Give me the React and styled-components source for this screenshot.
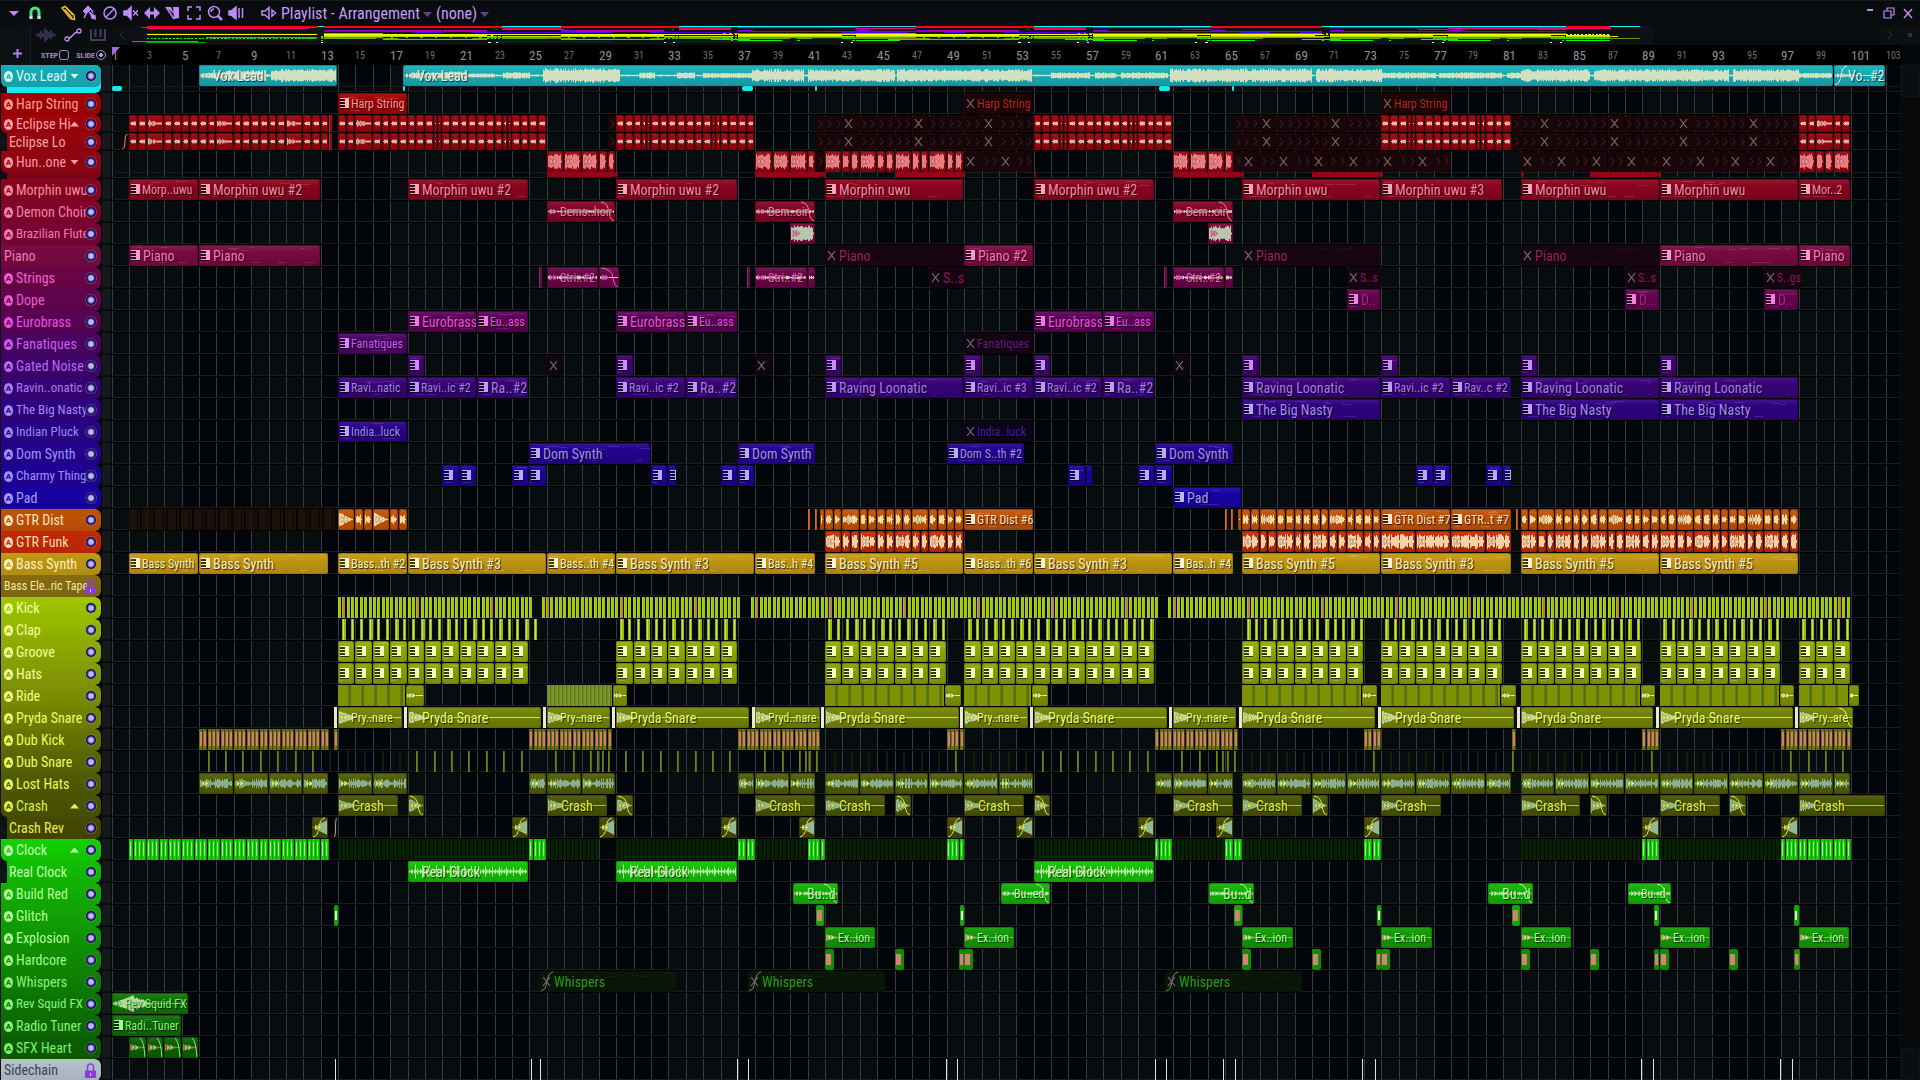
import React from "react";
import styled, { createGlobalStyle, css } from "styled-components";

const BAR = 17.39;
const px = (bars) => Math.round(bars * BAR);
const rnd = (n) => {
  const v = Math.sin(n * 12.9898 + 4.1) * 43758.5453;
  return v - Math.floor(v);
};

/* ---------- clip builders ---------- */
const P = (s, e, label, extra) => ({ k: "pat", s, e, label, ...extra });
const M = (s, e, label) => ({ k: "mute", s, e, label });
const A = (s, e, label, wave, extra) => ({ k: "aud", s, e, label, wave, ...extra });
const H = (s, w, tone) => ({ k: "hit", s, w, tone });
const D = (s, e) => ({ k: "dim", s, e });

const each = (list, fn) => list.flatMap(fn);
const run = (s, e, step, fn) => {
  const out = [];
  for (let i = 0; s + i * step < e - 0.01; i++) out.push(fn(s + i * step, i));
  return out;
};
const seq = (s, e, pattern, fn) => {
  const out = [];
  let at = s;
  for (let i = 0; at < e - 0.01; i++) {
    const w = Math.min(pattern[i % pattern.length], e - at);
    out.push(fn(at, at + w, i));
    at += w;
  }
  return out;
};

const tiny = (s, e) => A(s, e, null, e - s > 0.7 ? "hitWide" : "hit");
const roughly = [0.5, 0.5, 0.5, 0.25, 0.25, 0.5, 0.5, 0.5, 0.5];
const muffled = (s, e, crosses) => {
  const out = [];
  for (let at = s; at < e; ) {
    const x = crosses.includes(at);
    out.push({ ...M(at, at + (x ? 1 : 0.5)), x });
    at += x ? 1 : 0.5;
  }
  return out;
};
const eclipse = [
  ...seq(2, 3, [0.5], tiny), tiny(3, 4), ...seq(4, 7, [0.5], tiny), tiny(7, 8),
  ...seq(8, 11, [0.5], tiny), tiny(11, 12), ...seq(12, 13.5, [0.5], tiny), H(13.45, 3, "bar"),
  ...seq(14, 15, [0.5], tiny), tiny(15, 16), ...seq(16, 19, [0.5], tiny), ...seq(19, 26, [0.5, 0.25, 0.25, 0.5, 0.5, 0.5, 0.5, 0.5, 0.5], tiny),
  { ...M(29.5, 30), x: false }, ...seq(30, 38, roughly, tiny),
  ...muffled(41.5, 54, [43, 47, 51]),
  ...seq(54, 62, roughly, tiny),
  ...muffled(65.5, 74, [67, 71]),
  ...seq(74, 81.5, roughly, tiny),
  ...muffled(81.5, 98, [83, 87, 91, 95]),
  ...seq(98, 99, [0.5], tiny), tiny(99, 100), ...seq(100, 101, [0.5], tiny),
];

const big = (s, e) => A(s, e, null, "full");
const hunMute = (s, e) => seq(s, e, [1, 0.5, 0.5], (a, b, i) => ({ ...M(a, b), x: i % 3 === 0 }));
const hundred = [
  ...seq(26, 29, [1], big), ...seq(29, 30, [0.5], big),
  ...seq(38, 41.5, [1], big), { ...M(41.5, 42), x: false }, ...seq(42, 50, [1, 0.5, 0.5], big),
  ...hunMute(50, 54), ...seq(62, 65.5, [1], big), { ...M(65.5, 66), x: false }, ...hunMute(66, 78), ...hunMute(82, 98),
  big(98, 99), big(99, 99.5), big(99.5, 100), big(100, 101),
];

const gtrPattern = [0.5, 0.5, 1, 0.5, 0.5, 0.5, 0.5, 0.5, 0.5, 1, 0.5, 0.5, 0.5, 0.5];
const gtr = (s, e) => A(s, e, null, "mid");
const funk = (s, e) => A(s, e, null, "funk");
const snare = (s, e, label, extra) => [
  H(s - 0.22, 3, "cream"),
  A(s, e, label, "decay", extra),
];
const sections = [[14, 25], [30, 37], [42, 49], [50, 61], [66, 73], [74, 81], [82, 89], [90, 97], [98, 101]];
const beats = each(sections, ([s, e]) => run(s, e, 1, (a) => P(a, a + 1)));
const ride = each(
  [[14, 17.9, 19], [26, 29.8, 30.7], [42, 48.9, 49.9], [50, 53.9, 54.9], [66, 72.9, 73.8], [74, 80.9, 81.8], [82, 88.9, 89.8], [90, 96.9, 97.8], [98, 100.9, 101.5]],
  ([s, m, e]) => [{ k: "ride", s, e: m, dense: s === 26 }, A(m, e, null, "thin")]
);
const marks = (list, tone) => list.map((b) => H(b, 2, tone));
const from = (s, n) => Array.from({ length: n }, (_, i) => s + i);

const tracks = [
  {
    name: "Vox Lead", fold: "down", h: 28, sub: "#1ce6f0", c: "#18adb5", t: "#d6fbf6", w: "#e9e6c3",
    clips: [A(6, 14, "Vox Lead", "vox"), A(17.75, 100, "Vox Lead", "vox"), A(100, 103, "Vo..#2", "thin", { fadeIn: true })],
    subs: [[1, 1.6], [17.75, 17.85], [37.2, 37.85], [41.43, 41.5], [61.2, 61.85], [65.4, 65.5]],
  },
  { name: "Harp String", c: "#a30202", t: "#ff9a96", clips: [P(14, 18, "Harp String"), M(50, 54, "Harp String"), M(74, 78, "Harp String")] },
  { name: "Eclipse Hi", fold: "up", h: 18, c: "#a0030c", t: "#ffa3a0", w: "#ffc9b8", clips: eclipse },
  { name: "Eclipse Lo", child: true, h: 18, c: "#99040f", t: "#ffa3a0", w: "#d8cdb0", clips: [{ k: "fade", s: 1.6, e: 2 }, ...eclipse] },
  {
    name: "Hun..one", fold: "down", h: 28, sub: "#7d0418", c: "#930513", t: "#ff98a0", w: "#f08c88", clips: hundred,
    subs: [[26, 29.9], [29.9, 30.05], [38, 41.9], [41.9, 42.05], [46, 49.9], [49.9, 50.05], [54, 54.1], [62, 65.9], [65.9, 66.05], [70, 73.9], [73.9, 74.1], [82, 82.15], [86, 89.9], [89.9, 90.1]],
  },
  {
    name: "Morphin uwu", c: "#8a0520", t: "#f58aa4",
    clips: [P(2, 6, "Morp..uwu"), P(6, 13, "Morphin uwu #2"), P(18, 25, "Morphin uwu #2"), P(30, 37, "Morphin uwu #2"), P(42, 50, "Morphin uwu"), P(54, 61, "Morphin uwu #2"), P(66, 74, "Morphin uwu"), P(74, 81, "Morphin uwu #3"), P(82, 90, "Morphin uwu"), P(90, 98, "Morphin uwu"), P(98, 101, "Mor..2")],
  },
  { name: "Demon Choir", c: "#82042c", t: "#f580a8", w: "#cfd8ba", clips: [A(26, 30, "Demo..hoir", "mid2", { fadeOut: true }), A(38, 41.5, "Dem..oir", "mid2", { fadeOut: true }), A(62, 65.5, "Dem..oir", "mid2", { fadeOut: true })] },
  { name: "Brazilian Flute", c: "#7a0435", t: "#f27ab0", w: "#c0dcb8", clips: [A(40, 41.5, null, "full"), A(64, 65.5, null, "full")] },
  {
    name: "Piano", plain: true, c: "#780a42", t: "#f57ab8",
    clips: [P(2, 6, "Piano"), P(6, 13, "Piano"), M(42, 50, "Piano"), P(50, 54, "Piano #2"), M(66, 74, "Piano"), M(82, 90, "Piano"), P(90, 98, "Piano"), P(98, 101, "Piano")],
  },
  {
    name: "Strings", c: "#6c0448", t: "#ee62cc", w: "#e8e2c0",
    clips: [
      ...each([25.55, 37.5, 61.5], (s) => [H(s, 3, "bar")]),
      A(26, 29, "Stri..#2", "mid2"), A(29, 30.2, null, "thin", { fadeOut: true }), A(38, 41, "Stri..#2", "mid2"), A(41, 41.5, null, "mid2"), A(62, 65, "Stri..#2", "mid2"), A(65, 65.5, null, "mid2"),
      M(48, 50.2, "S..s"), M(72, 74.1, "S..s"), M(88, 90, "S..s"), M(96, 98.2, "S..gs"),
    ],
  },
  { name: "Dope", c: "#63044e", t: "#ee58d8", clips: [72, 88, 96].map((s) => P(s, s + 2, "D..", { quiet: true })) },
  { name: "Eurobrass", c: "#590455", t: "#f04ce0", clips: [P(18, 22, "Eurobrass"), P(22, 25, "Eu..ass"), P(30, 34, "Eurobrass"), P(34, 37, "Eu..ass"), P(54, 58, "Eurobrass"), P(58, 61, "Eu..ass")] },
  { name: "Fanatiques", c: "#4b0463", t: "#c85ef0", clips: [P(14, 18, "Fanatiques"), M(50, 54, "Fanatiques")] },
  { name: "Gated Noise", c: "#40036d", t: "#b46cf0", clips: [P(18, 19), M(26, 27), P(30, 31), M(38, 39), P(42, 43), P(50, 51), P(54, 55), M(62, 63), P(66, 67), P(74, 75), P(82, 83), P(90, 91)] },
  {
    name: "Ravin..onatic", c: "#370377", t: "#a77cf0",
    clips: [P(14, 18, "Ravi..natic"), P(18, 22, "Ravi..ic #2"), P(22, 25, "Ra..#2"), P(30, 34, "Ravi..ic #2"), P(34, 37, "Ra..#2"), P(42, 50, "Raving Loonatic"), P(50, 54, "Ravi..ic #3"), P(54, 58, "Ravi..ic #2"), P(58, 61, "Ra..#2"), P(66, 74, "Raving Loonatic"), P(74, 78, "Ravi..ic #2"), P(78, 81.5, "Rav..c #2"), P(82, 90, "Raving Loonatic"), P(90, 98, "Raving Loonatic")],
  },
  { name: "The Big Nasty", c: "#2f0380", t: "#a488f5", clips: [P(66, 74, "The Big Nasty"), P(82, 90, "The Big Nasty"), P(90, 98, "The Big Nasty")] },
  { name: "Indian Pluck", c: "#290388", t: "#9c86f5", clips: [P(14, 18, "India..luck"), M(50, 54, "India..luck")] },
  { name: "Dom Synth", c: "#240390", t: "#a090f8", clips: [P(25, 32, "Dom Synth"), P(37, 41.5, "Dom Synth"), P(49, 53.5, "Dom S..th #2"), P(61, 65.5, "Dom Synth")] },
  { name: "Charmy Thing", c: "#1e0398", t: "#a090f8", clips: [...each([20, 21, 24, 25, 32, 36, 37, 56, 60, 61, 76, 77, 80], (s) => [P(s, s + 1)]), P(33, 33.5), P(57, 57.4), P(81, 81.5)] },
  { name: "Pad", c: "#1902a4", t: "#a89cfa", clips: [P(62, 66, "Pad")] },
  {
    name: "GTR Dist", c: "#c25204", t: "#ffe3bd", w: "#ffe9b4",
    clips: [
      { k: "dim", s: 2, e: 14, wide: true },
      ...[[14, 15], [16, 17]].map(([a, b]) => A(a, b, null, "decay")), ...[[15, 15.5], [15.5, 16], [17, 17.5], [17.5, 18]].map(([a, b]) => gtr(a, b)),
      ...marks([41, 41.4, 65, 65.36, 81.75], "bar"), gtr(41.7, 42), gtr(65.75, 66),
      ...seq(42, 50, gtrPattern, gtr), P(50, 54, "GTR Dist #6"), ...seq(66, 74, gtrPattern, gtr), P(74, 78, "GTR Dist #7"), P(78, 81.5, "GTR..t #7"), ...seq(82, 90, gtrPattern, gtr), ...seq(90, 98, gtrPattern, gtr),
    ],
  },
  { name: "GTR Funk", c: "#c42a04", t: "#ffd9b4", w: "#fbe3b8", clips: [...seq(42, 50, [1, 0.5, 0.5], funk), ...seq(66, 74, [1, 0.5, 0.5], funk), ...seq(74, 81.5, [2], funk), ...seq(82, 98, [1, 0.5, 0.5], funk)] },
  {
    name: "Bass Synth", c: "#c19812", t: "#fff0c0",
    clips: [P(2, 6, "Bass Synth"), P(6, 13.5, "Bass Synth"), P(14, 18, "Bass..th #2"), P(18, 26, "Bass Synth #3"), P(26, 30, "Bass..th #4"), P(30, 38, "Bass Synth #3"), P(38, 41.5, "Bas..h #4"), P(42, 50, "Bass Synth #5"), P(50, 54, "Bass..th #6"), P(54, 62, "Bass Synth #3"), P(62, 65.5, "Bas..h #4"), P(66, 74, "Bass Synth #5"), P(74, 81.5, "Bass Synth #3"), P(82, 90, "Bass Synth #5"), P(90, 98, "Bass Synth #5")],
  },
  { name: "Bass Ele..ric Tape", plain: true, lock: true, c: "#886c0e", t: "#f5e7a8", clips: [] },
  {
    name: "Kick", c: "#a2c600", t: "#f2ff9c",
    clips: each([[14, 25.2], [25.7, 37.1], [37.75, 61.1], [61.75, 101]], ([s, e]) => run(s, e, 0.25, (a, i) => H(a, 3, i % 17 === 1 ? "pinkish" : "bar"))),
  },
  {
    name: "Clap", c: "#99ba00", t: "#f2ff9c",
    clips: each([[14.25, 25.5], [30.2, 37], [42.2, 49], [50.2, 61], [66.25, 73], [74.2, 81], [82.2, 89], [90.2, 97], [98.2, 101]], ([s, e]) => run(s, e, 0.5, (a, i) => H(a, i % 3 ? 3 : 4, "clap"))),
  },
  { name: "Groove", c: "#90ac02", t: "#f2ff9c", clips: beats },
  { name: "Hats", c: "#889f04", t: "#f2ff9c", clips: beats },
  { name: "Ride", c: "#7f9204", t: "#eeff88", w: "#f2f9b0", clips: ride },
  {
    name: "Pryda Snare", c: "#738404", t: "#e9ff6a", w: "#cfe0b0",
    clips: [
      ...snare(14, 17.72, "Pry..nare"), ...snare(18, 25.7, "Pryda Snare"), ...snare(26, 29.72, "Pry..nare"), ...snare(30, 37.7, "Pryda Snare"), ...snare(38, 41.75, "Pryd..nare"), ...snare(42, 49.75, "Pryda Snare"), ...snare(50, 53.72, "Pry..nare"),
      ...snare(54, 61.7, "Pryda Snare"), ...snare(62, 65.72, "Pry..nare"), ...snare(66, 73.7, "Pryda Snare"), ...snare(74, 81.7, "Pryda Snare"), ...snare(82, 89.7, "Pryda Snare"), ...snare(90, 97.7, "Pryda Snare"), ...snare(98, 101.2, "Pry..are", { fadeOut: true }),
    ],
  },
  {
    name: "Dub Kick", c: "#667504", t: "#e9ff5a",
    clips: each([[6, 13.5], [13.75, 14], [25, 29.7], [37, 41.7], [49, 50], [61, 65.7], [73, 74], [81.5, 81.7], [89, 90], [97, 101]], ([s, e]) => run(s, e, 0.25, (a) => H(a, 4, "pink"))),
  },
  {
    name: "Dub Snare", c: "#5b6804", t: "#e9ff5a",
    clips: [
      ...marks([...from(6.5, 7), ...from(18.5, 7), ...from(26.5, 3), 28.9, 29.15, 29.5, ...from(30.5, 7), ...from(38.5, 3), 40.85, 41.1, 41.5, 49.5, ...from(54.5, 7), ...from(62.5, 3), 64.85, 65.1, 65.5, 73.5, 81.5, 89.5, ...from(97.5, 4)], "bar"),
      ...marks([...from(13.5, 5), ...from(42.5, 7), ...from(50.5, 4), ...from(66.5, 7), ...from(74.5, 7), ...from(82.5, 7), ...from(90.5, 7)], "faint"),
    ],
  },
  {
    name: "Lost Hats", c: "#505c04", t: "#e9ff5a", w: "#8fb9a0",
    clips: each([[6, 8], [8, 10], [10, 12], [12, 13.5], [14, 16], [16, 18], [25, 26], [26, 28], [28, 30], [37, 38], [38, 40], [40, 41.5], ...seq(42, 54, [2], (a, b) => [a, b]), [61, 62], [62, 64], [64, 65.5], ...seq(66, 81.5, [2], (a, b) => [a, b]), ...seq(82, 101, [2], (a, b) => [a, b])], ([a, b]) => [A(a, b, null, "noise")]),
  },
  {
    name: "Crash", fold: "up", c: "#4a5402", t: "#dff23c", w: "#9cc4a8",
    clips: [...each([14, 26, 38, 42, 50, 62, 66, 74, 82, 90], (s) => [A(s, s + 3.5, "Crash", "decay")]), A(98, 103, "Crash", "decay"), ...each([18, 30, 46, 54, 70, 86, 94], (s) => [A(s, s + 1, null, "decay", { fadeOut: true })])],
  },
  {
    name: "Crash Rev", child: true, c: "#444a02", t: "#e8f052", w: "#9cc4a8",
    clips: [12.5, 24, 29, 36, 40.5, 49, 53, 60, 64.5, 73, 89, 97].map((s) => A(s, s + 1, null, "rev", { fadeIn: true })).concat([{ k: "fade", s: 13.75, e: 14 }]),
  },
  {
    name: "Clock", fold: "up", c: "#12d202", t: "#c8ffb4",
    clips: [
      ...each([[2, 13.5], [25, 26], [37, 38], [41, 42], [49, 50], [61, 62], [65, 66], [73, 74], [89, 90], [97, 101]], ([s, e]) => run(s, e, 0.25, (a) => H(a, 4, "clock"))),
      D(14, 25), D(26, 29), D(30, 37), D(38, 41), D(42, 49), D(54, 61), D(62, 65), D(66, 73), D(82, 89), D(90, 97),
    ],
  },
  { name: "Real Clock", child: true, c: "#12c002", t: "#c4ffb0", w: "#c8f0b8", clips: [18, 30, 54].map((s) => A(s, s + 7, "Real Clock", "spikes")) },
  { name: "Build Red", c: "#12b204", t: "#b4ff98", w: "#b8ecae", clips: [[40.15, 42.8, "Bu..d"], [52.15, 55, "Bu..ed"], [64.1, 66.75, "Bu..d"], [80.15, 82.75, "Bu..d"], [88.15, 90.7, "Bu..d"]].map(([a, b, l]) => A(a, b, l, "mid2", { fadeOut: true })) },
  { name: "Glitch", c: "#11a604", t: "#b4ff98", clips: [H(13.75, 4, "flash"), H(41.5, 8, "blush"), H(49.75, 4, "flash"), H(65.5, 8, "blush"), H(73.75, 4, "flash"), H(81.5, 8, "blush"), H(89.7, 5, "flash"), H(97.7, 5, "flash")] },
  { name: "Explosion", c: "#109a04", t: "#b4ff98", w: "#d99a80", clips: [42, 50, 66, 74, 82, 90, 98].map((s) => A(s, s + 2.95, "Ex..ion", "decaySm")) },
  { name: "Hardcore", c: "#0f8e04", t: "#a2fa8c", clips: [H(49.7, 5, "blush"), H(73.7, 5, "blush"), H(89.7, 5, "blush"), H(97.7, 6, "blush"), ...[42, 46, 50, 66, 70, 74, 82, 86, 90, 94].map((s) => H(s, 9, "blush"))] },
  { name: "Whispers", c: "#0e8204", t: "#8cf27c", clips: [[25.6, 33.5], [37.6, 45.5], [61.55, 69.5]].map(([a, b]) => ({ ...M(a, b, "Whispers"), fadeIn: true })) },
  { name: "Rev Squid FX", c: "#0d7604", t: "#86f578", w: "#c4e8ac", clips: [A(1, 5.45, "Rev Squid FX", "squid")] },
  { name: "Radio Tuner", c: "#0c6c04", t: "#86f578", clips: [P(1, 5, "Radi..Tuner")] },
  { name: "SFX Heart", c: "#0b6004", t: "#7af06c", w: "#d8605c", clips: [2, 3, 4, 5].map((s) => A(s, s + 1, null, "decaySm", { curl: true })) },
  { name: "Sidechain", plain: true, lock: true, c: "#b6c1cf", t: "#3a4450", clips: [13.8, 25.1, 25.6, 36.95, 37.6, 48.95, 49.6, 60.95, 61.6, 64.9, 65.6, 72.9, 73.6, 88.9, 89.6, 96.9, 97.6].map((s) => H(s, 1, "white")) },
];

/* ---------- styles ---------- */
const Global = createGlobalStyle`
  *, *::before, *::after { box-sizing: border-box; }
  body { margin: 0; background: #05090b; overflow: hidden; }
  button { font: inherit; color: inherit; background: none; border: 0; padding: 0; cursor: pointer; }
`;
const Window = styled.div`
  min-width: 1200px; height: 100vh; display: flex; flex-direction: column; overflow: hidden;
  background: #06090b; color: #b98cf5; font-family: "Roboto Condensed", "Open Sans Condensed", "Liberation Sans Narrow", Roboto, sans-serif; font-size: 14px;
`;
const TitleBar = styled.header`
  display: flex; align-items: center; height: 25px; padding: 0 3px 0 6px; background: #080c0e; border-top: 1px solid #14181a; flex: none;
`;
const Tools = styled.div`display: flex; align-items: center; gap: 1px;`;
const ToolButton = styled.button`
  width: ${(p) => p.$w || 20}px; height: 22px; display: grid; place-items: center; color: ${(p) => p.$c || "#bf8af8"};
  svg { width: 16px; height: 16px; display: block; }
`;
const Title = styled.h1`margin: 0; font-size: 16px; font-weight: 400; color: #c79af8; white-space: nowrap;`;
const Caret = styled.span`width: 9px; height: 5px; margin: 3px 4px 0 3px; background: #5d4380; clip-path: polygon(0 0, 100% 0, 50% 100%);`;
const Spacer = styled.div`flex: 1;`;

const Head = styled.div`display: grid; grid-template-columns: 112px minmax(0, 1fr); height: 40px; flex: none; background: #06090b;`;
const Corner = styled.div`display: grid; grid-template-columns: 31px 1fr; background: #0a0e10;`;
const AddBox = styled.div`display: grid; place-items: end center; padding: 0 0 2px 5px; border-right: 1px solid #1a1f22; border-top-left-radius: 12px; background: #0d1113;`;
const AddButton = styled.button`color: #b67ff2; width: 20px; height: 20px; display: grid; place-items: center;`;
const Modes = styled.div`display: grid; grid-template-rows: 20px 20px;`;
const ModeRow = styled.div`display: flex; align-items: center; justify-content: space-between; padding: 0 6px 0 ${(p) => (p.$inset ? 10 : 5)}px;`;
const ModeButton = styled.button`color: ${(p) => (p.$on ? "#bf90f0" : "#463a58")}; svg { display: block; }`;
const Toggle = styled.label`display: flex; align-items: center; gap: 1px; font-size: 8px; font-weight: 700; color: #9f86bd;`;
const Tick = styled.input`
  appearance: none; margin: 0; width: 10px; height: 10px; border: 1px solid #a48cc4; border-radius: ${(p) => (p.$round ? "50%" : "3px")};
  ${(p) => p.$round && css`background: radial-gradient(circle, #b99bdc 0 2px, transparent 2px);`}
`;
const TimeHead = styled.div`display: grid; grid-template-rows: 20px 20px; min-width: 0;`;
const Overview = styled.div`display: flex; align-items: stretch; padding: 1px 0; background: #0a0d0f;`;
const Arrow = styled.button`width: 20px; color: #2c3236; display: grid; place-items: center; background: #0c1012;`;
const MapBox = styled.div`flex: none; width: 1521px; height: 18px; background: #0e1214; svg { display: block; filter: brightness(1.6) saturate(1.4); }`;
const Ruler = styled.div`position: relative; background: #000; overflow: hidden; margin-right: 18px;`;
const BarNo = styled.span`
  position: absolute; bottom: 0; line-height: 18px; font-size: ${(p) => (p.$major ? 13 : 10)}px; color: ${(p) => (p.$major ? "#8e9294" : "#6c7073")};
`;
const Playhead = styled.span`position: absolute; left: 0; top: 2px; width: 8px; height: 9px; background: #a06ce0; clip-path: polygon(0 0, 100% 0, 0 100%);`;

const Body = styled.div`display: flex; flex: 1; min-height: 0; overflow: hidden;`;
const Rows = styled.main`position: relative; flex: 1; min-width: 0;`;
const GridLayer = styled.div`position: absolute; top: 0; bottom: 0; left: 112px; right: 0; overflow: hidden; background: #02060a;`;
const Band = styled.i`position: absolute; top: 0; bottom: 0; background: #070c0f;`;
const GridLine = styled.i`position: absolute; top: 0; bottom: 0; width: 1px; background: #373c3f;`;
const ScrollBar = styled.div`width: 20px; display: flex; flex-direction: column; justify-content: space-between; background: #07090b; border-left: 1px solid #0c0f11;`;
const Thumb = styled.div`height: 32px; background: #0b0e10; border: 1px solid #101416;`;

const Row = styled.section`
  position: relative; display: grid; grid-template-columns: 101px 11px minmax(0, 1fr); height: ${(p) => p.$h}px;
  --c: ${(p) => p.$c}; --t: ${(p) => p.$t}; --w: ${(p) => p.$w};
`;
const Name = styled.div`
  display: flex; align-items: center; height: ${(p) => (p.$sub ? 22 : p.$h)}px; padding: 0 5px 0 ${(p) => (p.$child ? 2 : 3)}px;
  border-radius: 0 6px 6px ${(p) => (p.$fold ? 6 : 0)}px; color: var(--t); background: linear-gradient(var(--c), color-mix(in srgb, var(--c) 92%, black));
`;
const NameCell = styled.div`
  padding: 0 0 0 ${(p) => (p.$child ? 7 : 1)}px; background: ${(p) => (p.$sub ? `linear-gradient(90deg, #0a0d0f 7px, ${p.$sub} 7px)` : "repeating-linear-gradient(45deg, #0b0e10 0 1px, #15191b 1px 2px)")};
  border-radius: 0 6px 6px 0; overflow: hidden;
`;
const Badge = styled.span`
  flex: none; width: 9px; height: 11px; border-radius: 50%; background: var(--t); color: var(--c); font: 700 8px/11px Roboto, sans-serif; text-align: center; margin-right: 3px;
`;
const TrackName = styled.span`flex: 1; min-width: 0; white-space: nowrap; font-size: ${(p) => p.$size}px; line-height: 18px;`;
const Fold = styled.button`
  flex: none; width: 9px; height: 5px; margin-right: 7px; background: var(--t); clip-path: ${(p) => (p.$dir === "up" ? "polygon(50% 0, 100% 100%, 0 100%)" : "polygon(0 0, 100% 0, 50% 100%)")};
`;
const Led = styled.button`
  flex: none; width: 10px; height: 10px; border-radius: 50%; background: radial-gradient(circle, #c0b8ff 0 2px, #7468d0 3px, #14104a 4px); box-shadow: 0 0 0 1px color-mix(in srgb, var(--c) 55%, #8a8a96);
`;
const LockButton = styled.button`flex: none; color: #8a3ddb; svg { display: block; }`;
const Strip = styled.div`margin: 0 1px 1px 1px; background: #16191b; border-bottom: 1px solid #0c0e0f;`;
const Lane = styled.div`position: relative; overflow: hidden; border-bottom: 1px solid #000; box-shadow: inset 0 -1px #1b1c1c;`;
const clipBox = css`position: absolute; top: 0; ${(p) => (p.$sub ? "height: 21px;" : "bottom: 0;")}`;
const Clip = styled.div`
  ${clipBox}
  display: flex; align-items: center; gap: ${(p) => (p.$tight ? 2 : 3)}px; padding: 0 0 0 2px; overflow: hidden; border-radius: 3px; white-space: nowrap; color: var(--t);
  ${(p) => p.$mute ? css`
    background: color-mix(in srgb, var(--c) 14%, #070507); color: color-mix(in srgb, var(--c) 78%, var(--t));
  ` : css`
    background: linear-gradient(color-mix(in srgb, var(--c) 92%, white), var(--c) 30%, color-mix(in srgb, var(--c) 88%, black));
    box-shadow: inset 0 0 0 1px color-mix(in srgb, var(--c) 82%, black);
  `}
  > svg { flex: none; }
`;
const ClipText = styled.span`
  position: relative; font-size: ${(p) => (p.$tight ? 12 : 14)}px; line-height: 18px; opacity: ${(p) => (p.$quiet ? 0.45 : 1)};
  text-shadow: 1px 1px 1px rgba(0, 0, 0, 0.8);
`;
const Art = styled.svg`position: absolute; left: 0; top: 0; width: 100%; height: 100%;`;
const Icon = styled.svg`position: relative; display: block;`;
const tones = {
  bar: "linear-gradient(90deg, color-mix(in srgb, var(--c) 85%, white) 0 1px, var(--c) 1px)",
  faint: "color-mix(in srgb, var(--c) 22%, #04080a)",
  pinkish: "linear-gradient(90deg, var(--c) 0 1px, #c07a50 1px)",
  clap: "linear-gradient(90deg, var(--c) 0 1px, #c6dc70 1px 2px, var(--c) 2px)",
  pink: "linear-gradient(transparent 0 3px, #d87a78 3px 17px, transparent 17px) 1px 0 / 2px 100% no-repeat, linear-gradient(90deg, var(--c) 0 3px, color-mix(in srgb, var(--c) 60%, black) 3px)",
  cream: "#efe6cc",
  clock: "linear-gradient(transparent 0 3px, #a0f090 3px 17px, transparent 17px) 1px 0 / 1px 100% no-repeat, linear-gradient(90deg, var(--c) 0 3px, #0c9a02 3px)",
  flash: "linear-gradient(transparent 30%, #eef0c0 30% 70%, transparent 70%) 1px 0 / 2px 100% no-repeat, var(--c)",
  blush: "linear-gradient(transparent 22%, #d8807a 22% 78%, transparent 78%) 1px 0 / 60% 100% no-repeat, var(--c)",
  white: "#dfe4ea",
};
const Hit = styled.i`${clipBox} background: ${(p) => tones[p.$tone]}; border-radius: ${(p) => (p.$tone === "blush" || p.$tone === "flash" ? 2 : 0)}px;`;
const Dim = styled.i`
  ${clipBox}
  background: ${(p) => p.$wide
    ? "repeating-linear-gradient(90deg, #1c110a 0 8px, #080604 8px 9px, #1c110a 9px 11px, #080604 11px 13px)"
    : "repeating-linear-gradient(90deg, color-mix(in srgb, var(--c) 14%, #040704) 0 3px, #040805 3px 4px)"};
`;
const Ride = styled.i`
  ${clipBox}
  background: repeating-linear-gradient(90deg, var(--c) 0 ${(p) => (p.$dense ? 2 : 10)}px, ${(p) => (p.$dense ? "#6c9a8c" : "#5a7a3a")} ${(p) => (p.$dense ? "2px 3px" : "10px 11px")}, color-mix(in srgb, var(--c) 75%, black) ${(p) => (p.$dense ? "3px 4px" : "11px 13px")});
`;
const SubClip = styled.i`position: absolute; bottom: 1px; height: 5px; border-radius: 2px; background: ${(p) => p.$c};`;
const SubRule = styled.i`position: absolute; left: 0; right: 0; top: 21px; height: 1px; background: #000; border-bottom: 1px solid #1b1c1c;`;

/* ---------- drawings ---------- */
const voxLevels = [
  [6.1, 7.5, 3], [7.5, 9.8, 5], [9.8, 10.1, 1.5], [10.1, 14, 6], [18.2, 18.5, 3], [18.5, 20, 3], [20, 21.4, 4], [21.4, 23, 2], [23.5, 25, 3],
  [25.8, 30.2, 7], [31.3, 32.2, 3], [33.5, 34.5, 3], [35, 37.8, 2.5], [37.8, 40.8, 6], [41, 46, 6], [46.1, 53.9, 6], [55, 57.2, 3], [57.5, 58.7, 3],
  [59, 61.7, 3], [61.8, 70, 6.5], [70.2, 74, 6.5], [74, 77.1, 3], [77.3, 80.9, 3], [81.2, 82, 3], [82, 86, 6], [86.2, 94, 6], [94.2, 98, 6], [98, 100, 2.5],
];
const amp = (type, x, w, seed, start) => {
  const r = rnd(x * 3 + seed);
  const t = x / w;
  switch (type) {
    case "vox": {
      const bar = start + x / BAR;
      const level = voxLevels.find(([a, b]) => bar >= a && bar < b);
      return level ? level[2] * (0.65 + r * 0.45) : 0.5 + r * 0.5;
    }
    case "hit": return x < 2 || x > w - 2 ? 0.5 : 1.5 + r * 0.5;
    case "hitWide": return x < w * 0.55 ? 1 + r * 3 * (1 - t) : 1;
    case "full": return x < 1 || x > w - 3 ? 1 : 5 + r * 3;
    case "funk": return x > w - 3 || x % 9 < 1 ? 1.5 : 4 + r * 3.5;
    case "mid": return x < 1 || x > w - 3 ? 0.5 : 2 + r * 3;
    case "mid2": return 0.5 + r * 1.5;
    case "thin": return t < 0.4 ? 1 + r : 0.5;
    case "decay": return Math.max(0.5, (w > 30 ? 7 - x * 0.35 : 8 * (1 - t * 1.1)) * (0.7 + r * 0.3));
    case "decaySm": return Math.max(0.5, 4 * (1 - x / 14) * (0.7 + r * 0.3));
    case "rev": return t < 0.25 ? 0.5 : t * 8;
    case "noise": return 1 + r * 4;
    case "spikes": return x % 7 < 1 ? 7 - t * 3 : x % 3 < 1 ? 2 + r : 1;
    case "squid": return x < 22 ? x * 0.35 + r : Math.max(0.5, 8 - (x - 22) * 0.45) * (0.6 + r * 0.4);
    default: return 1;
  }
};
function Wave({ type, w, h, seed, start }) {
  let d = "";
  const mid = Math.floor(h / 2);
  for (let x = 1; x < w - 1; x++) {
    const a = Math.min(mid - 1, amp(type, x, w, seed, start));
    d += `M${x}.5 ${(mid + 0.5 - a).toFixed(1)}V${(mid + 0.5 + a).toFixed(1)}`;
  }
  return <path d={d} stroke="var(--w)" strokeWidth="1" fill="none" opacity="0.9" />;
}
function Notes({ w, h, seed }) {
  const n = Math.floor(w / 12);
  return (
    <g fill="var(--t)" opacity="0.22">
      {Array.from({ length: n }, (_, i) => (
        <rect key={i} x={Math.round(rnd(seed + i) * (w - 10))} y={rnd(seed + i * 3) > 0.5 ? 2 + Math.round(rnd(i + seed * 2) * 4) : h - 4} width={3 + Math.round(rnd(i * 7 + seed) * 9)} height="1" />
      ))}
    </g>
  );
}
const PatternIcon = () => (
  <Icon width="9" height="11" viewBox="0 0 9 11" shapeRendering="crispEdges" aria-hidden="true">
    <path d="M0 1H10V11H0Z" fill="rgba(0,0,0,.65)" />
    <path d="M5 0H9V10H5ZM0 0H5V1H0ZM0 3H5V4H0ZM0 6H5V7H0ZM0 9H5V10H0Z" fill="color-mix(in srgb, var(--t) 75%, white)" />
  </Icon>
);
const WaveIcon = () => (
  <Icon width="9" height="9" viewBox="0 0 9 9" aria-hidden="true">
    <path d="M1 1L4 4.5L1 8ZM4 1.5L8 4.5L4 7.5Z" fill="var(--t)" stroke="rgba(0,0,0,.5)" strokeWidth=".5" />
  </Icon>
);
const CrossIcon = () => (
  <Icon width="9" height="11" viewBox="0 0 9 11" aria-hidden="true"><path d="M1 1L8 10M8 1L1 10" stroke="#756e72" strokeWidth="1.2" /></Icon>
);
const ChevIcon = () => (
  <Icon width="5" height="9" viewBox="0 0 5 9" aria-hidden="true"><path d="M1 1L4 4.5L1 8" stroke="#3a2c32" fill="none" /></Icon>
);

/* rough label width: wide letters count for more */
const labelWidth = (label) => label.length * 6 + (label.match(/[mwM]/g) || []).length * 2;
const nameSize = (name) => (name.length > 15 ? 12 : name.length > 11 ? 13 : 14);

function Item({ clip, h, sub, seed }) {
  const left = px(clip.s - 1);
  const w = clip.w || Math.max(2, px(clip.e - 1) - left - 1);
  const style = { left, width: w };
  const ch = h - 1;
  if (clip.k === "hit") return <Hit $tone={clip.tone} $sub={sub} style={style} />;
  if (clip.k === "dim") return <Dim $wide={clip.wide} $sub={sub} style={style} />;
  if (clip.k === "ride") return <Ride $dense={clip.dense} $sub={sub} style={style} />;
  if (clip.k === "fade")
    return (
      <Clip $mute $sub={sub} style={style}>
        <Art><path d={`M0 ${ch - 1}Q${w / 2} ${ch - 1} ${w / 2} ${ch / 2}T${w} 1`} stroke="#b0a890" fill="none" /></Art>
      </Clip>
    );
  const mute = clip.k === "mute";
  const label = clip.label;
  const tight = !!label && labelWidth(label) + 14 > w;
  return (
    <Clip $mute={mute} $sub={sub} $tight={tight} style={style}>
      <Art aria-hidden="true">
        {clip.k === "aud" && <Wave type={clip.wave} w={w} h={ch} seed={seed} start={clip.s} />}
        {clip.k === "pat" && w > 12 && <Notes w={w} h={ch} seed={seed} />}
        {mute && label && w > 60 && <g opacity="0.25"><Notes w={w} h={ch} seed={seed} /></g>}
        {clip.fadeOut && <path d={`M${w > 25 ? w - 14 : 2} 1Q${w - 7} 2 ${w - 6} ${ch / 2}T${w - 1} ${ch - 1}`} stroke="var(--t)" fill="none" />}
        {clip.fadeIn && <path d={`M1 ${ch - 1}Q6 ${ch - 2} 7 ${ch / 2}T13 1`} stroke={mute ? "#7a8878" : "var(--t)"} fill="none" />}
        {clip.curl && <path d={`M${w - 6} 1Q${w - 2} 4 ${w - 1} ${ch}`} stroke="var(--t)" fill="none" />}
      </Art>
      {clip.k === "pat" && w > 6 && <PatternIcon />}
      {clip.k === "aud" && w > 13 && <WaveIcon />}
      {mute && (clip.x === false ? <ChevIcon /> : <CrossIcon />)}
      {label && <ClipText $tight={tight} $quiet={clip.quiet}>{label}</ClipText>}
    </Clip>
  );
}

function Minimap() {
  const k = 1508 / 102;
  return (
    <svg width="1521" height="18" shapeRendering="crispEdges" aria-hidden="true">
      {tracks.map((t, i) =>
        t.clips.map((c, j) => (
          <rect
            key={`${i}-${j}`} x={((c.s - 1) * k).toFixed(1)} y={Math.floor((i * 17) / tracks.length)} width={Math.max(1, (c.e ? c.e - c.s : 0.15) * k).toFixed(1)} height="1"
            fill={t.c} opacity={c.k === "mute" || c.k === "dim" || c.tone === "faint" ? 0.15 : 1}
          />
        ))
      )}
    </svg>
  );
}

const S = ({ children, ...p }) => (
  <svg viewBox="0 0 16 16" fill="none" stroke="currentColor" strokeWidth="1.5" aria-hidden="true" {...p}>{children}</svg>
);
const tools = [
  ["Snap", "#4fe08a", <S key="a" strokeWidth="3"><path d="M4 14V7a4 4 0 0 1 8 0v7" /><path d="M2.5 12.5H5.5M10.5 12.5H13.5" stroke="#c8f5d8" strokeWidth="2.5" /></S>],
  ["Draw", "#f0b840", <S key="b"><path d="M2 3L5 1.5L14 10L14.5 14.5L10.5 13.5Z" /><path d="M4.5 4.5L12 12.5M6.5 3L13 10" /></S>],
  ["Paint", null, <S key="c"><path d="M2 6L7 1L10 4L5 9Z" fill="currentColor" strokeWidth="1" /><path d="M5 9L3 13M10 4L12 8M8 7L14 13" /><path d="M10 9L14 11L14 14L11 13Z" fill="currentColor" /></S>],
  ["Delete", null, <S key="d"><circle cx="8" cy="8" r="6" /><path d="M4 12L12 4" /></S>],
  ["Mute", null, <S key="e"><path d="M1 6H4L8 2V14L4 10H1Z" fill="currentColor" /><path d="M10 5.5L15 10.5M15 5.5L10 10.5" /></S>],
  ["Slip", null, <S key="f"><path d="M0 8L6 2V14ZM16 8L10 2V14Z" fill="currentColor" stroke="none" /><path d="M5 8H11" strokeWidth="3" /></S>],
  ["Slice", null, <S key="g"><path d="M1 2H6L9 9ZM8 2H14V13L9 14Z" fill="currentColor" stroke="none" /><path d="M1 2L9 14" /></S>],
  ["Select", null, <S key="h"><path d="M2 6V2H6M10 2H14V6M14 10V14H10M6 14H2V10" /></S>],
  ["Zoom", null, <S key="i"><circle cx="7" cy="7" r="5.5" /><path d="M11 11L15 15" strokeWidth="2.5" /><path d="M4 7A3 3 0 0 1 7 4" /></S>],
  ["Play selection", null, <S key="j"><path d="M1 6H3L8 2V14L3 10H1Z" fill="currentColor" /><path d="M11 3V13M14.5 3V13" /></S>],
];
const Lock = () => (
  <svg width="11" height="15" viewBox="0 0 11 15" aria-hidden="true"><path d="M2.5 8V4a3 3 0 0 1 6 0V8" fill="none" stroke="currentColor" strokeWidth="1.5" /><path d="M0 7.5H11V15H0Z" fill="currentColor" /><path d="M5.5 10V13" stroke="#d8c0f5" /></svg>
);

export default function App() {
  return (
    <Window>
      <Global />
      <TitleBar>
        <Tools>
          <ToolButton $w={16} aria-label="Menu"><svg viewBox="0 0 16 16"><path d="M3 6H13L8 11Z" fill="currentColor" /></svg></ToolButton>
          {tools.map(([name, c, icon], i) => (
            <React.Fragment key={name}>
              <ToolButton $c={c} aria-label={name} $w={i === 0 ? 24 : 20}>{icon}</ToolButton>
              {i === 0 && <ToolButton as="span" $w={9} />}
            </React.Fragment>
          ))}
          <ToolButton as="span" $w={9} />
          <ToolButton aria-label="Playlist options" $w={24}><S><path d="M1 6H4L8 2.5V13.5L4 10H1ZM11 5L14.5 8L11 11Z" /></S></ToolButton>
        </Tools>
        <Title>Playlist - Arrangement</Title>
        <Caret />
        <Title as="span">(none)</Title>
        <Caret />
        <Spacer />
        <ToolButton $w={19} aria-label="Minimise"><S><path d="M5 5H11" strokeWidth="2" /></S></ToolButton>
        <ToolButton $w={19} aria-label="Restore"><S strokeWidth="1.2"><path d="M3 6H10V13H3ZM6 6V3H13V10H10" /></S></ToolButton>
        <ToolButton $w={19} aria-label="Close"><S><path d="M4 4L12 13M12 4L4 13" /></S></ToolButton>
      </TitleBar>

      <Head>
        <Corner>
          <AddBox><AddButton aria-label="Add track"><svg width="9" height="9" viewBox="0 0 9 9"><path d="M4.5 0V9M0 4.5H9" stroke="currentColor" strokeWidth="2" /></svg></AddButton></AddBox>
          <Modes>
            <ModeRow>
              <ModeButton aria-label="Audio"><svg width="20" height="14" viewBox="0 0 20 14"><path d="M0 7H2M3 5V9M5 3V11M7 5V9M9 0V14M11 2V12M13 4V10M15 2V11M17 5V9M18 7H20" stroke="currentColor" strokeWidth="1.5" /></svg></ModeButton>
              <ModeButton $on aria-label="Automation"><svg width="18" height="14" viewBox="0 0 18 14" fill="none" stroke="currentColor" strokeWidth="1.3"><circle cx="3" cy="11" r="2" /><circle cx="15" cy="3" r="2" /><path d="M5 10C9 9 9 5 13 4" /></svg></ModeButton>
              <ModeButton aria-label="Patterns"><svg width="16" height="12" viewBox="0 0 16 12"><path d="M1 0V11H15V0M5.5 0V8M10.5 0V8" stroke="currentColor" strokeWidth="2" fill="none" /></svg></ModeButton>
            </ModeRow>
            <ModeRow $inset>
              <Toggle>STEP <Tick type="checkbox" /></Toggle>
              <Toggle>SLIDE <Tick type="checkbox" $round /></Toggle>
            </ModeRow>
          </Modes>
        </Corner>
        <TimeHead>
          <Overview>
            <Arrow aria-label="Scroll left"><svg width="6" height="10" viewBox="0 0 6 10"><path d="M5 1L1 5L5 9" stroke="currentColor" fill="none" /></svg></Arrow>
            <MapBox><Minimap /></MapBox>
            <Spacer />
            <Arrow aria-label="Scroll right"><svg width="6" height="10" viewBox="0 0 6 10"><path d="M1 1L5 5L1 9" stroke="currentColor" fill="none" /></svg></Arrow>
            <Arrow aria-label="Zoom to fit"><svg width="4" height="4"><path d="M0 0H4V4H0Z" fill="currentColor" /></svg></Arrow>
          </Overview>
          <Ruler>
            {Array.from({ length: 52 }, (_, i) => i * 2 + 1).map((n) => (
              <BarNo key={n} $major={n % 4 === 1} style={{ left: px(n - 1) }}>{n}</BarNo>
            ))}
            <Playhead />
          </Ruler>
        </TimeHead>
      </Head>

      <Body>
        <Rows>
          <GridLayer aria-hidden="true">
            {Array.from({ length: 13 }, (_, i) => <Band key={i} style={{ left: px(i * 8), width: px(4) }} />)}
            {Array.from({ length: 103 }, (_, i) => <GridLine key={i} style={{ left: px(i) }} />)}
          </GridLayer>
          {tracks.map((t, ti) => {
            const h = t.h || 22;
            const sub = !!t.sub;
            return (
              <Row key={t.name} $h={h} $c={t.c} $t={t.t} $w={t.w || "#fff"}>
                <NameCell $sub={t.sub} $child={t.child}>
                  <Name $h={h} $sub={sub} $fold={t.fold} $child={t.child}>
                    {!t.child && !t.plain && <Badge>A</Badge>}
                    <TrackName $size={nameSize(t.name)}>{t.name}</TrackName>
                    {t.fold && <Fold $dir={t.fold} aria-label={`Fold ${t.name}`} />}
                    {t.lock ? <LockButton aria-label={`Unlock ${t.name}`}><Lock /></LockButton> : <Led aria-label={`Mute ${t.name}`} />}
                  </Name>
                </NameCell>
                <Strip />
                <Lane>
                  {sub && <SubRule />}
                  {t.clips.map((c, i) => (
                    <Item key={i} clip={c} h={sub ? 22 : h} sub={sub} seed={ti * 31 + i * 7} />
                  ))}
                  {sub && t.subs.map(([a, b]) => (
                    <SubClip key={a} $c={ti ? "#94051a" : "#1ce6f0"} style={{ left: px(a - 1), width: Math.max(2, px(b - a)) }} />
                  ))}
                </Lane>
              </Row>
            );
          })}
        </Rows>
        <ScrollBar><Thumb /><Thumb /></ScrollBar>
      </Body>
    </Window>
  );
}
